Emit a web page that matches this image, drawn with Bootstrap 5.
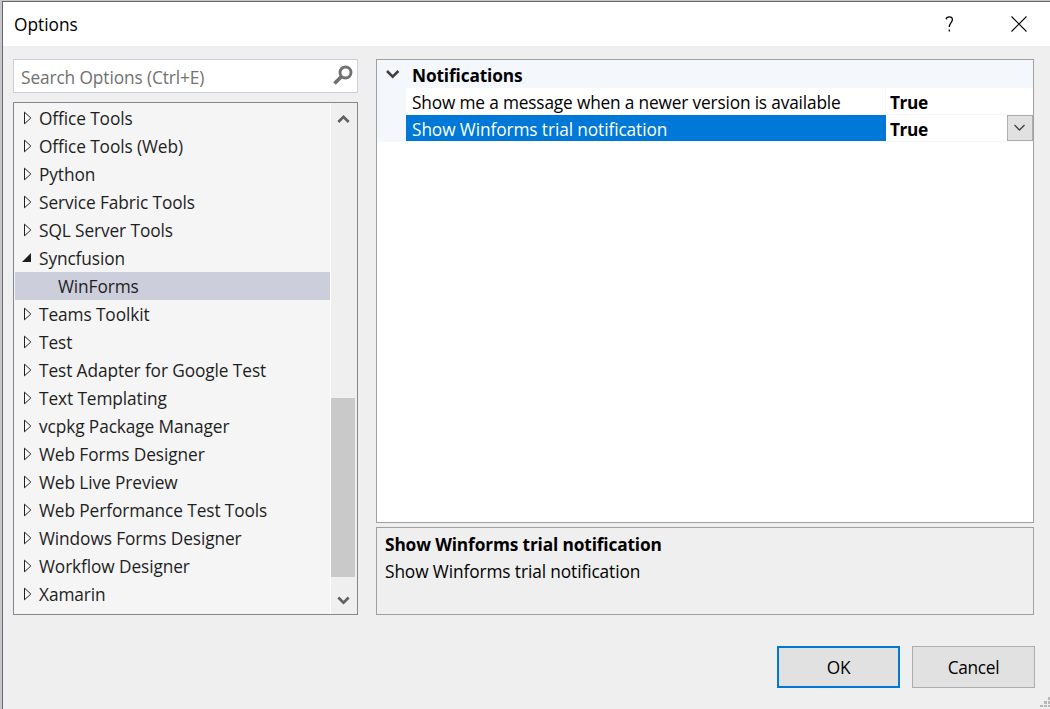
<!DOCTYPE html>
<html lang="en">
<head>
<meta charset="utf-8">
<title>Options</title>
<link href="https://cdn.jsdelivr.net/npm/bootstrap@5.3.0/dist/css/bootstrap.min.css" rel="stylesheet">
<style>
body{background:#c8c8cc;width:1050px;height:709px;overflow:hidden;font-family:"Open Sans","Noto Sans",sans-serif;font-size:17.3px;line-height:27px;color:#000;letter-spacing:-.1px}
.dialog{margin:1px 0 0 2px;height:708px;border:solid #67676c;border-width:1px 0 0 1px;background:#efefef}
.titlebar{height:44px;padding-left:11px;letter-spacing:0}
.titlebar svg{display:block}
.content-area{padding:13px 16px 0 10px;gap:18px}
.side{width:345px}
.search{height:34px;border:1px solid #ccceda;color:#717171;padding:4px 4px 0 7px;margin-bottom:9px}
.search svg{margin-top:1px}
.tree{height:513px;border:1px solid #828790;background:#f5f5f5;color:#1e1e1e}
.tree ul{width:317px;padding:1px 0 0 1px;border-right:1px solid #fff}
.tree li{height:28px;line-height:29px;padding-left:7px}
.tree li svg{width:11px;height:14px;flex:none;margin-right:6px}
.tree li.picked{background:#cccedb;padding-left:43px}
.scroller{width:26px;background:#efefef}
.scroller .thumb{width:24px;height:179px;margin-top:273px;background:#c9c9c9}
.main{width:658px}
.props{height:464px;border:1px solid #a0a0a0}
.gutter{width:29px;background:#f4f7fc}
.category{height:28px;background:#f4f7fc;line-height:31px}
.category svg{margin:9px 12px 0 9px}
.prop{height:27px;line-height:30px}
.prop .key{width:480px;padding-left:6px;border-right:1px solid #f4f7fc;letter-spacing:-.17px}
.prop .val{height:27px;border-bottom:1px solid #f4f7fc;padding-left:4px;letter-spacing:-.4px}
.prop.on .key{height:26px;background:#0078d7;color:#fff;border:0;letter-spacing:-.1px}
.dropper{width:26px;height:26px;background:#e1e1e1;border:1px solid #adadad}
.heavy{font-weight:700;letter-spacing:-.14px}
.desc{height:88px;margin-top:4px;border:1px solid #a0a0a0;padding:3px 8px}
.actions{padding:31px 15px 0 0;gap:12px}
.push{width:123px;height:42px;border:1px solid #adadad;background:#e1e1e1;border-radius:0;color:#000;font:inherit;letter-spacing:-.3px;padding:0}
.push.default{border:2px solid #0078d7}
.grip{right:0;bottom:2px}
</style>
</head>
<body>
<svg class="d-none">
<symbol id="closed" viewBox="0 0 11 14"><path d="M2.500 1.200v11.600L8.800 7z" fill="#fff" stroke="#1e1e1e"/></symbol>
<symbol id="open" viewBox="0 0 11 14"><path d="M9 2v9H0z" fill="#1e1e1e"/></symbol>
</svg>
<div class="dialog position-relative">
<header class="titlebar bg-white d-flex align-items-center">
<span class="me-auto">Options</span>
<svg width="9" height="16" viewBox="0 0 9 16" fill="none" stroke="#000" stroke-width="1.300"><path d="M1 3.200C1.500 1.500 2.600.9 4.200.9c2 0 3.200 1 3.200 2.700C7.400 6.600 4.300 6.700 4.300 11"/><path d="M4.300 13.500v2"/></svg>
<svg width="16" height="16" viewBox="0 0 16 16" stroke="#000" stroke-width="1.100" style="margin:0 23px 0 57px"><path d="m.5.5 15 15m0-15-15 15"/></svg>
</header>
<div class="content-area d-flex">
<aside class="side">
<div class="search bg-white d-flex justify-content-between"><span>Search Options (Ctrl+E)</span>
<svg width="20" height="22" viewBox="0 0 20 22" fill="none" stroke="#717171"><circle cx="12.500" cy="7.500" r="5.500" stroke-width="2.900"/><path d="m8.500 11.500-7 7" stroke-width="3.800"/></svg></div>
<div class="tree d-flex">
<ul class="list-unstyled mb-0">
<li class="d-flex align-items-center"><svg><use href="#closed"/></svg><span>Office Tools</span></li>
<li class="d-flex align-items-center"><svg><use href="#closed"/></svg><span>Office Tools (Web)</span></li>
<li class="d-flex align-items-center"><svg><use href="#closed"/></svg><span>Python</span></li>
<li class="d-flex align-items-center"><svg><use href="#closed"/></svg><span>Service Fabric Tools</span></li>
<li class="d-flex align-items-center"><svg><use href="#closed"/></svg><span>SQL Server Tools</span></li>
<li class="d-flex align-items-center"><svg><use href="#open"/></svg><span>Syncfusion</span></li>
<li class="picked"><span>WinForms</span></li>
<li class="d-flex align-items-center"><svg><use href="#closed"/></svg><span>Teams Toolkit</span></li>
<li class="d-flex align-items-center"><svg><use href="#closed"/></svg><span>Test</span></li>
<li class="d-flex align-items-center"><svg><use href="#closed"/></svg><span>Test Adapter for Google Test</span></li>
<li class="d-flex align-items-center"><svg><use href="#closed"/></svg><span>Text Templating</span></li>
<li class="d-flex align-items-center"><svg><use href="#closed"/></svg><span>vcpkg Package Manager</span></li>
<li class="d-flex align-items-center"><svg><use href="#closed"/></svg><span>Web Forms Designer</span></li>
<li class="d-flex align-items-center"><svg><use href="#closed"/></svg><span>Web Live Preview</span></li>
<li class="d-flex align-items-center"><svg><use href="#closed"/></svg><span>Web Performance Test Tools</span></li>
<li class="d-flex align-items-center"><svg><use href="#closed"/></svg><span>Windows Forms Designer</span></li>
<li class="d-flex align-items-center"><svg><use href="#closed"/></svg><span>Workflow Designer</span></li>
<li class="d-flex align-items-center"><svg><use href="#closed"/></svg><span>Xamarin</span></li>
</ul>
<div class="scroller d-flex flex-column">
<svg class="d-block" width="24" height="22" viewBox="0 0 24 22" fill="none" stroke="#606060" stroke-width="2.600"><path d="m7.300 19 5.200-5.200 5.200 5.200"/></svg>
<div class="thumb"></div>
<svg class="d-block" width="24" height="32" viewBox="0 0 24 32" fill="none" stroke="#606060" stroke-width="2.600"><path d="m7.300 20.500 5.200 5.200 5.200-5.200"/></svg>
</div>
</div>
</aside>
<main class="main">
<section class="props bg-white">
<div class="category heavy d-flex"><svg width="14" height="12" viewBox="0 0 14 12" fill="none" stroke="#404040" stroke-width="2.600"><path d="m1 2 5.700 5.700L12.400 2"/></svg><span>Notifications</span></div>
<div class="d-flex">
<div class="gutter"></div>
<div class="flex-grow-1">
<div class="prop d-flex"><div class="key">Show me a message when a newer version is available</div><div class="val heavy flex-grow-1">True</div></div>
<div class="prop on d-flex"><div class="key">Show Winforms trial notification</div><div class="val heavy flex-grow-1 d-flex justify-content-between"><span>True</span>
<div class="dropper d-flex align-items-center justify-content-center"><svg width="12" height="8" viewBox="0 0 12 8" fill="none" stroke="#404040" stroke-width="1.300"><path d="m.5 1 5 5 5-5"/></svg></div></div></div>
</div>
</div>
</section>
<section class="desc"><div class="heavy">Show Winforms trial notification</div><div>Show Winforms trial notification</div></section>
</main>
</div>
<footer class="actions d-flex justify-content-end"><button class="btn push default">OK</button><button class="btn push">Cancel</button></footer>
<svg class="grip position-absolute" width="10" height="10" viewBox="0 0 10 10" fill="#b8b8b8"><path d="M0 8h3v2H0zm4 0h3v2H4zm4 0h2v2H8zM4 4h3v3H4zm4 0h2v3H8zm0-4h2v3H8z"/></svg>
</div>
<script src="https://cdn.jsdelivr.net/npm/bootstrap@5.3.0/dist/js/bootstrap.bundle.min.js"></script>
</body>
</html>
